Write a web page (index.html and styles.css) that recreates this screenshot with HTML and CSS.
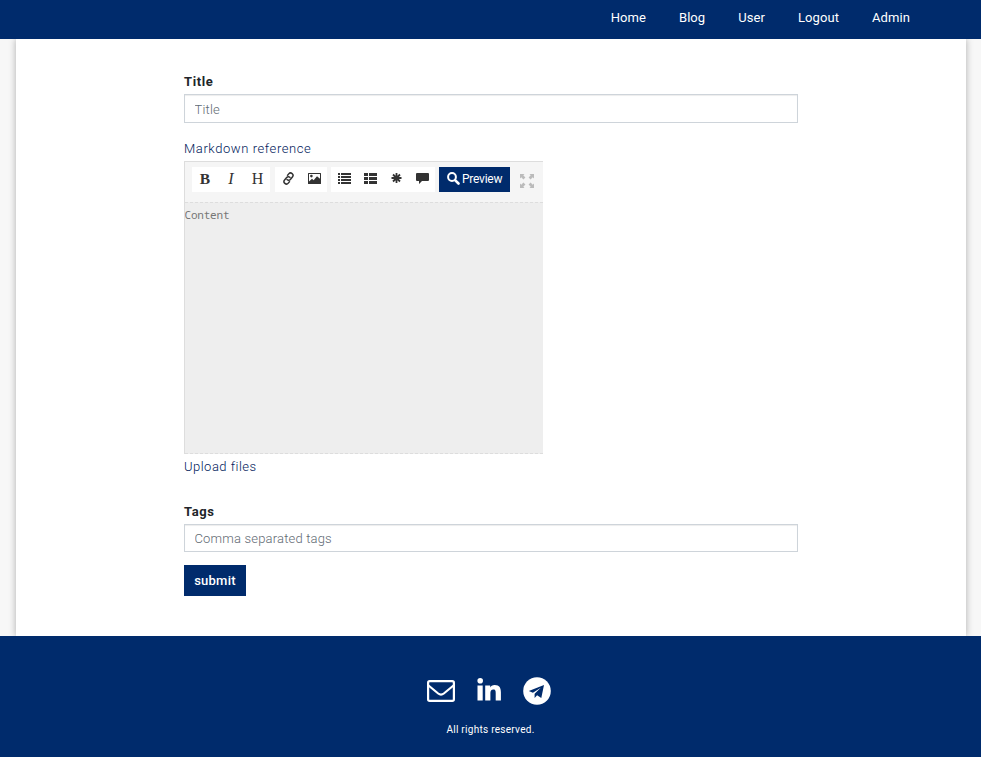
FILE: index.html
```
<!DOCTYPE html>
<html lang="en">
<head>
<meta charset="utf-8">
<title>New post</title>
<link rel="stylesheet" href="styles.css">
</head>
<body>
<nav class="navbar">
  <a>Home</a><a>Blog</a><a>User</a><a>Logout</a><a>Admin</a>
</nav>
<main class="page">
  <form class="post-form">
    <label for="title">Title</label>
    <input id="title" class="field title-field" type="text" placeholder="Title">
    <a class="link reference">Markdown reference</a>
    <div class="editor">
      <div class="toolbar">
        <div class="group">
          <button type="button" class="tool glyph bold">B</button>
          <button type="button" class="tool glyph italic">I</button>
          <button type="button" class="tool glyph heading">H</button>
        </div>
        <div class="group">
          <button type="button" class="tool"><svg width="13" height="13" viewBox="0 0 13 13"><g transform="rotate(-50 6.5 6.5)" fill="none" stroke="currentColor" stroke-width="1.5"><path d="M5.2 9.3H2.8a2.4 2.4 0 0 1 0-4.8h3.2a2.3 2.3 0 0 1 2.2 3"/><path d="M7.8 3.7h2.4a2.4 2.4 0 0 1 0 4.8H7a2.3 2.3 0 0 1-2.2-3"/></g></svg></button>
          <button type="button" class="tool"><svg width="13" height="13" viewBox="0 0 13 13"><path fill="currentColor" fill-rule="evenodd" d="M.5 1h12q.5 0 .5.5v10q0 .5-.5.5H.5q-.5 0-.5-.5v-10Q0 1 .5 1zM1 2v7.500l3-2.800 1.600 1.500L9 4.200l3 2.600V2zM3.400 2.800a1.300 1.300 0 1 1 0 2.600 1.300 1.300 0 0 1 0-2.600z"/></svg></button>
        </div>
        <div class="group">
          <button type="button" class="tool"><svg width="13" height="13" viewBox="0 0 13 13"><path fill="currentColor" d="M0 1h2v2H0zM3 1h10v2H3zM0 4h2v2H0zM3 4h10v2H3zM0 7h2v2H0zM3 7h10v2H3zM0 10h2v2H0zM3 10h10v2H3z"/></svg></button>
          <button type="button" class="tool"><svg width="13" height="13" viewBox="0 0 13 13"><path fill="currentColor" d="M0 1h4v3H0zM5 1h8v3H5zM0 5h4v3H0zM5 5h8v3H5zM0 9h4v3H0zM5 9h8v3H5z"/></svg></button>
          <button type="button" class="tool"><svg width="13" height="13" viewBox="0 0 13 13"><path fill="none" stroke="currentColor" stroke-width="1.8" d="M6.500 1v10M1.500 6h10M3 2.500l7 7M10 2.500l-7 7"/></svg></button>
          <button type="button" class="tool"><svg width="13" height="13" viewBox="0 0 13 13"><path fill="currentColor" d="M1 1h11q1 0 1 1v6q0 1-1 1H6l-3 3V9H1Q0 9 0 8V2q0-1 1-1z"/></svg></button>
        </div>
        <button type="button" class="preview"><svg width="13" height="13" viewBox="0 0 13 13"><circle cx="5" cy="5" r="3.900" fill="none" stroke="currentColor" stroke-width="2"/><path stroke="currentColor" stroke-width="2.600" stroke-linecap="round" d="M8.300 8.300l3.200 3.200"/></svg><span>Preview</span></button>
        <button type="button" class="expand"><svg width="14" height="14" viewBox="0 0 14 14"><g fill="currentColor"><path id="corner" d="M0 0h4.500L3.300 1.300l2.100 2.100-2 2-2.100-2.100L0 4.500z"/><use href="#corner" transform="matrix(-1 0 0 1 14 0)"/><use href="#corner" transform="matrix(1 0 0 -1 0 14)"/><use href="#corner" transform="matrix(-1 0 0 -1 14 14)"/></g></svg></button>
      </div>
      <textarea class="content" placeholder="Content"></textarea>
    </div>
    <a class="link upload">Upload files</a>
    <label for="tags" class="tags-label">Tags</label>
    <input id="tags" class="field" type="text" placeholder="Comma separated tags">
    <button type="button" class="submit">submit</button>
  </form>
</main>
<footer class="footer">
  <div class="social">
    <svg class="mail" width="28" height="22" viewBox="0 0 28 22" fill="none" stroke="currentColor" stroke-width="2.200"><rect x="1.100" y="1.100" width="25.800" height="19.800" rx="1.600"/><path d="M1.500 5.500l9.700 8q2.800 2.200 5.600 0l9.700-8"/></svg>
    <svg class="linkedin" width="24" height="23" viewBox="0 0 24 23" fill="currentColor"><circle cx="3.200" cy="2.800" r="2.800"/><path d="M.5 7.400h5.200v15.200H.5zM8.200 7.400h5v2.100c.7-1.300 2-2.500 4.500-2.500 4.900 0 6.200 3.100 6.200 7.300v8.300h-5.200v-7.400c0-1.800 0-3.800-2.300-3.800s-3 1.700-3 3.700v7.500H8.200z"/></svg>
    <svg class="telegram" width="28" height="28" viewBox="0 0 28 28"><circle cx="14" cy="14" r="13.800" fill="#fff"/><path fill="#002b6c" d="M21 8L5.800 14.100l4.100 1.600L17.800 10.700l-6.200 6v4.200l2.500-2.600 4.200 2.600z"/></svg>
  </div>
  <p>All rights reserved.</p>
</footer>
</body>
</html>
```
FILE: styles.css
```
* { box-sizing: border-box; }
body {
  margin: 0;
  background: #f7f7f7;
  color: #212529;
  font: 300 13px/20px Roboto, sans-serif;
  letter-spacing: .58px;
}
button, input, textarea { font: inherit; letter-spacing: inherit; margin: 0; border-radius: 0; }
button { border: 0; padding: 0; }
svg { display: block; flex: none; }
.navbar {
  position: relative;
  z-index: 1;
  display: flex;
  justify-content: flex-end;
  gap: 33px;
  height: 39px;
  padding: 8px 71px 0 0;
  background: #002b6c;
  color: #fff;
  font-weight: 400;
  letter-spacing: .08px;
}
.page {
  width: 950px;
  height: 597px;
  margin: 0 auto 0 16px;
  background: #fff;
  box-shadow: 0 0 7px rgba(0, 0, 0, .3);
}
.post-form {
  display: flex;
  flex-direction: column;
  align-items: flex-start;
  width: 614px;
  margin-left: 168px;
  padding-top: 33px;
}
label { font-weight: 700; height: 22px; }
.field {
  width: 100%;
  height: 28px;
  padding: 0 10px 0 9.5px;
  border: 1px solid #ced4da;
  box-shadow: inset 0 1px 1px rgba(0, 0, 0, .075);
  background: #fff;
  letter-spacing: .18px;
}
.title-field { height: 29px; padding-top: 1px; }
::placeholder { color: #5f6a73; opacity: 1; }
.link { color: #00205a; }
.reference { height: 22px; margin-top: 16px; }
.editor {
  width: 359px;
  height: 293px;
  border: 1px solid #ddd;
  border-right: 0;
  border-bottom: 0;
}
.toolbar {
  display: flex;
  height: 40px;
  padding: 5px 0 0 7px;
  gap: 4px;
  background: #f5f5f5;
  color: #333;
}
.group { display: flex; height: 25px; background: #fff; }
.group:first-child { margin-right: 1px; }
.tool {
  display: flex;
  justify-content: center;
  align-items: center;
  width: 26px;
  height: 23px;
  background: none;
  color: #333;
}
.glyph { font: 400 16px/23px "Liberation Serif", serif; letter-spacing: 0; }
.bold { font-weight: 700; font-size: 15.5px; }
.italic { font-style: italic; }
.heading { padding-left: 1px; }
.preview {
  display: flex;
  align-items: center;
  gap: 2px;
  width: 71px;
  height: 25px;
  padding: 0 0 2px 8px;
  background: #002b6c;
  color: #fff;
  font-size: 12px;
  font-weight: 400;
  letter-spacing: -.25px;
}
.expand { height: 14px; margin: 7px 0 0 6px; background: none; color: #bbb; }
.content {
  display: block;
  width: 100%;
  height: 252px;
  padding: 3px 0 0;
  border: 0 dashed #ddd;
  border-width: 1px 0;
  background: #eee;
  font: 400 11px/18px "Noto Sans Mono", "DejaVu Sans Mono", monospace;
  letter-spacing: -.2px;
  text-indent: -.5px;
  resize: none;
}
.content::placeholder { color: #777; }
.upload { margin-top: 3px; height: 20px; letter-spacing: .48px; }
.tags-label { margin-top: 25px; height: 22px; }
.submit {
  width: 62px;
  height: 31px;
  margin-top: 13px;
  background: #002b6c;
  color: #fff;
  font-weight: 500;
  letter-spacing: .25px;
}
.footer {
  position: relative;
  height: 121px;
  padding-top: 40px;
  background: #002b6c;
  color: #fff;
  text-align: center;
}
.social { display: flex; justify-content: center; align-items: center; height: 29px; gap: 22px; padding-right: 3px; }
.linkedin { margin-bottom: 2px; }
.footer p { margin: 15px 0 0; font-size: 10px; font-weight: 400; letter-spacing: .28px; }
```
